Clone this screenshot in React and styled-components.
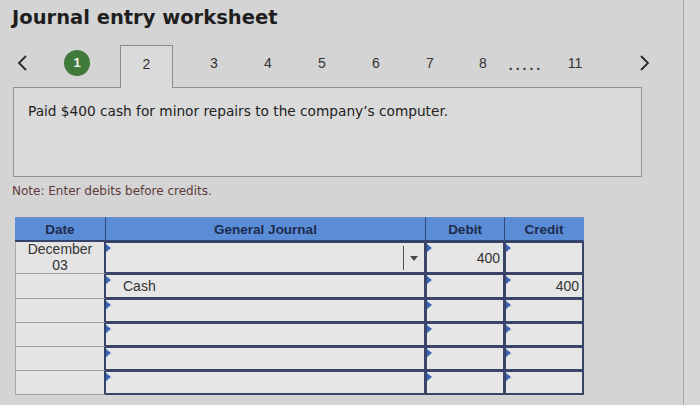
import React from 'react'
import styled, { createGlobalStyle } from 'styled-components'

const GlobalStyle = createGlobalStyle`
  html, body {
    margin: 0;
    padding: 0;
    background: #d6d6d6;
  }
  #root {
    min-height: 405px;
  }
`

const Page = styled.div`
  width: 684px;
  min-height: 405px;
  box-sizing: border-box;
  border-right: 1px solid #a8a8a8;
  background: #d4d4d4;
  font-family: 'DejaVu Sans', Verdana, sans-serif;
  color: #222;
  overflow: hidden;
`

const Title = styled.h1`
  margin: 0;
  padding: 6px 0 0 12px;
  height: 38px;
  box-sizing: border-box;
  font-size: 19.5px;
  font-weight: bold;
  color: #1e1e1e;
`

const TabBar = styled.div`
  display: flex;
  align-items: flex-end;
  height: 49px;
  font-family: 'Liberation Sans', Arial, sans-serif;
`

const Slot = styled.div`
  width: ${({ w }) => w}px;
  height: 42px;
  display: flex;
  align-items: center;
  justify-content: center;
  font-size: 14px;
  color: #333;
  padding-bottom: 7px;
  box-sizing: border-box;
`

const ActiveTab = styled.div`
  width: 53px;
  height: 43px;
  margin-left: 10px;
  margin-right: 14px;
  margin-bottom: -1px;
  box-sizing: border-box;
  border: 1px solid #8c8c8c;
  border-bottom: none;
  background: #dadada;
  display: flex;
  align-items: center;
  justify-content: center;
  padding-bottom: 7px;
  font-size: 14px;
  color: #333;
  position: relative;
  z-index: 1;
`

const StepDone = styled.span`
  width: 26px;
  height: 26px;
  border-radius: 50%;
  background: #3f7a3a;
  color: #f2f2f2;
  font-size: 13px;
  font-weight: bold;
  display: flex;
  align-items: center;
  justify-content: center;
`

const Dots = styled.span`
  font-size: 14px;
  font-weight: bold;
  letter-spacing: 3px;
  color: #3a3a3a;
  padding-top: 4px;
`

const Prompt = styled.div`
  margin-left: 13px;
  width: 629px;
  height: 90px;
  box-sizing: border-box;
  border: 1px solid #929292;
  background: #dadada;
  padding: 15px 0 0 14px;
  font-size: 13.7px;
  color: #222;
`

const Note = styled.div`
  padding: 7px 0 0 12px;
  font-size: 12px;
  color: #5e3a3a;
  height: 40px;
  box-sizing: border-box;
`

const Table = styled.div`
  margin-left: 15px;
  width: 569px;
  font-family: 'Liberation Sans', Arial, sans-serif;
  font-size: 14px;
  color: #333;
`

const Grid = styled.div`
  display: grid;
  grid-template-columns: 91px 320px 79px 79px;
`

const HeadCell = styled.div`
  height: 25px;
  box-sizing: border-box;
  background: #5b8dd6;
  border-right: 1px solid ${({ last }) => (last ? '#5b8dd6' : '#34497a')};
  border-top: 1px solid #6c8fc6;
  border-bottom: 2px solid #34436c;
  display: flex;
  align-items: center;
  justify-content: center;
  font-weight: bold;
  font-size: 13.5px;
  color: #1c2b4e;
`

const DateCell = styled.div`
  height: ${({ h }) => h}px;
  box-sizing: border-box;
  background: #e4e4e4;
  border-left: 1px solid #a9a9a9;
  border-bottom: 1px solid #9f9f9f;
  border-right: 2px solid #34436c;
  display: flex;
  align-items: center;
  justify-content: center;
  text-align: center;
  line-height: 16px;
  padding-bottom: 2px;
`

const InputCell = styled.div`
  position: relative;
  height: ${({ h }) => h}px;
  box-sizing: border-box;
  background: #e6e6e6;
  border-top: 1px solid #3a4468;
  border-bottom: 2px solid #3a4468;
  border-right: 2px solid #3a4468;
  border-left: ${({ first }) => (first ? '0' : '1px solid #3a4468')};
  display: flex;
  align-items: center;
  justify-content: ${({ right }) => (right ? 'flex-end' : 'flex-start')};
  padding: ${({ right }) => (right ? '0 3px 0 0' : '0 0 0 17px')};

  &::before {
    content: '';
    position: absolute;
    left: 0;
    top: 1px;
    border-left: 5px solid #3b63b8;
    border-top: 4px solid transparent;
    border-bottom: 4px solid transparent;
  }
`

const Select = styled.div`
  position: absolute;
  right: 0;
  top: 3px;
  bottom: 2px;
  width: 20px;
  border-left: 1px solid #555;
  display: flex;
  align-items: center;
  justify-content: center;

  &::after {
    content: '';
    border-top: 5px solid #4a4a4a;
    border-left: 4px solid transparent;
    border-right: 4px solid transparent;
  }
`

const Chevron = ({ dir }) => (
  <svg width="12" height="18" viewBox="0 0 12 18">
    <path
      d={dir === 'left' ? 'M10 2 L3 9 L10 16' : 'M2 2 L9 9 L2 16'}
      fill="none"
      stroke="#2a2a2a"
      strokeWidth="1.8"
    />
  </svg>
)

const rows = [
  { date: ['December', '03'], account: '', debit: '400', credit: '', h: 32, select: true },
  { date: [], account: 'Cash', debit: '', credit: '400', h: 25 },
  { date: [], account: '', debit: '', credit: '', h: 24 },
  { date: [], account: '', debit: '', credit: '', h: 24 },
  { date: [], account: '', debit: '', credit: '', h: 24 },
  { date: [], account: '', debit: '', credit: '', h: 24 },
]

export default function App() {
  return (
    <>
      <GlobalStyle />
      <Page>
        <Title>Journal entry worksheet</Title>
        <TabBar>
          <Slot w={44}><Chevron dir="left" /></Slot>
          <Slot w={66}><StepDone>1</StepDone></Slot>
          <ActiveTab>2</ActiveTab>
          <Slot w={54}>3</Slot>
          <Slot w={54}>4</Slot>
          <Slot w={54}>5</Slot>
          <Slot w={54}>6</Slot>
          <Slot w={54}>7</Slot>
          <Slot w={52}>8</Slot>
          <Slot w={34}><Dots>.....</Dots></Slot>
          <Slot w={64}>11</Slot>
          <Slot w={76}><Chevron dir="right" /></Slot>
        </TabBar>
        <Prompt>Paid $400 cash for minor repairs to the company’s computer.</Prompt>
        <Note>Note: Enter debits before credits.</Note>
        <Table>
          <Grid>
            <HeadCell>Date</HeadCell>
            <HeadCell>General Journal</HeadCell>
            <HeadCell>Debit</HeadCell>
            <HeadCell last>Credit</HeadCell>
          </Grid>
          {rows.map((r, i) => (
            <Grid key={i}>
              <DateCell h={r.h}>
                {r.date.length > 0 && (
                  <span>
                    {r.date[0]}
                    <br />
                    {r.date[1]}
                  </span>
                )}
              </DateCell>
              <InputCell h={r.h} first>
                {r.account}
                {r.select && <Select />}
              </InputCell>
              <InputCell h={r.h} right>{r.debit}</InputCell>
              <InputCell h={r.h} right>{r.credit}</InputCell>
            </Grid>
          ))}
        </Table>
      </Page>
    </>
  )
}
